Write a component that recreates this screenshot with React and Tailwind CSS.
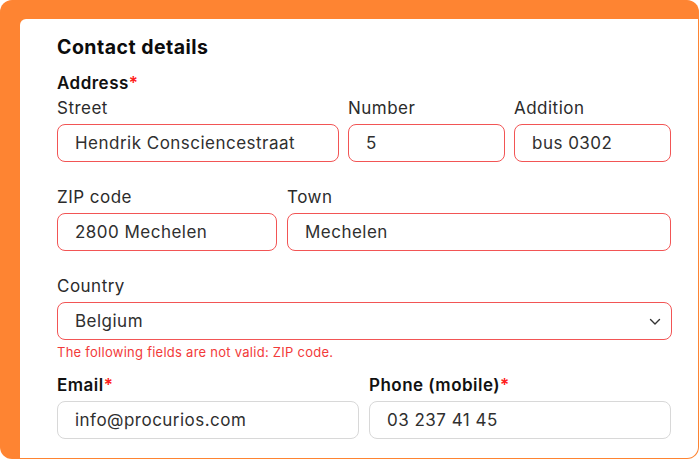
const font = { fontFamily: 'Inter, "Open Sans", sans-serif' };

function Label({ children, required, bold }) {
  return (
    <div className={`h-[20px] leading-[20px] text-[17px] ${bold ? 'font-semibold text-[#111]' : 'text-[#2b2b2b]'}`}>
      {children}
      {required && <span className="text-[#ff2020]">*</span>}
    </div>
  );
}

function Field({ label, value, invalid = true, className = '' }) {
  return (
    <div className={`flex flex-col ${className}`}>
      {label && <Label>{label}</Label>}
      <div
        className={`mt-[6px] h-[38px] flex items-center pl-[17px] pt-[2px] rounded-[8px] border bg-white text-[17px] text-[#2f2f2f] ${
          invalid ? 'border-[#f25555]' : 'border-[#d8d8d8]'
        }`}
      >
        {value}
      </div>
    </div>
  );
}

export default function App() {
  return (
    <div className="w-[700px] h-[460px] bg-white" style={font}>
      <div className="w-[699px] h-[459px] rounded-[12px] bg-[#fe8432] pl-[20px] pt-[19px] pr-[1px] pb-[1px]">
        <div className="h-full bg-white rounded-tl-[6px] rounded-br-[11px] pl-[37px] pr-[26px] pt-[16px] tracking-[0.03em]">
          <h2 className="h-[24px] leading-[24px] text-[19.5px] font-bold text-[#0c0c0c]">Contact details</h2>

          <div className="mt-[14px]">
            <Label bold required>Address</Label>
          </div>

          <div className="mt-[5px] grid grid-cols-[282px_157px_157px] gap-x-[9px]">
            <Field label="Street" value="Hendrik Consciencestraat" />
            <Field label="Number" value="5" />
            <Field label="Addition" value="bus 0302" />
          </div>

          <div className="mt-[25px] grid grid-cols-[220px_384px] gap-x-[10px]">
            <Field label="ZIP code" value="2800 Mechelen" />
            <Field label="Town" value="Mechelen" />
          </div>

          <div className="mt-[25px] flex flex-col">
            <Label>Country</Label>
            <div className="mt-[6px] h-[38px] flex items-center justify-between pl-[17px] pt-[2px] pr-[10px] rounded-[8px] border border-[#f25555] text-[17px] text-[#2f2f2f]">
              <span>Belgium</span>
              <svg width="12" height="8" viewBox="0 0 12 8" fill="none">
                <path d="M1.5 1.5 6 6l4.5-4.5" stroke="#333" strokeWidth="1.4" strokeLinecap="round" strokeLinejoin="round" />
              </svg>
            </div>
            <div className="mt-[4px] h-[16px] leading-[16px] text-[13px] text-[#f23a3a] tracking-[0.02em]">
              The following fields are not valid: ZIP code.
            </div>
          </div>

          <div className="mt-[15px] grid grid-cols-[302px_302px] gap-x-[10px]">
            <div className="flex flex-col">
              <Label bold required>Email</Label>
              <Field value="info@procurios.com" invalid={false} />
            </div>
            <div className="flex flex-col">
              <Label bold required>Phone (mobile)</Label>
              <Field value="03 237 41 45" invalid={false} />
            </div>
          </div>
        </div>
      </div>
    </div>
  );
}
